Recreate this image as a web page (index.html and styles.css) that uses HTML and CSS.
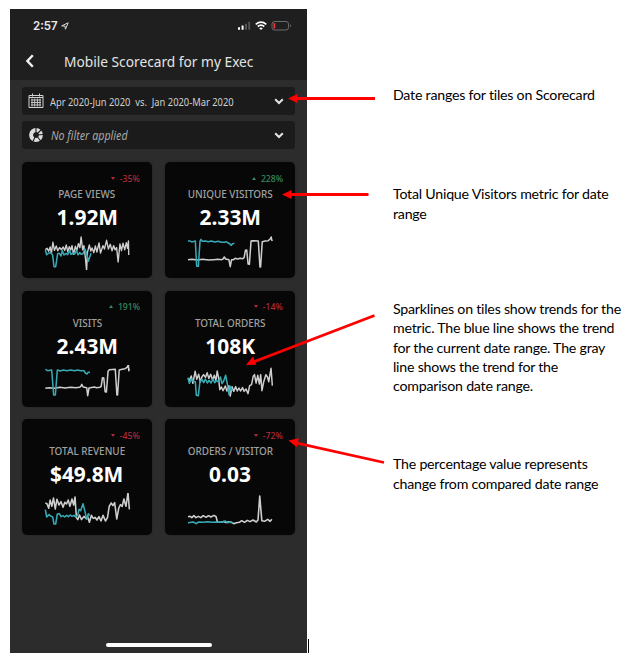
FILE: index.html
```html
<!DOCTYPE html>
<html lang="en">
<head>
<meta charset="utf-8">
<title>Mobile Scorecard</title>
<link rel="stylesheet" href="styles.css">
</head>
<body>
<main class="page">
  <section class="phone">
    <header class="top">
      <div class="status">
        <span class="time">2:57</span>
        <svg class="loc" width="8" height="8" viewBox="0 0 8 8"><path d="M.7 3.9 7.2.8 4.4 7.2 4 4.1Z"/></svg>
        <svg class="system" width="56" height="12" viewBox="0 0 56 12">
          <path d="M1 7.2h2v2.5H1zM4.600 5.600h2v4.100h-2z" fill="#fff"/>
          <path d="M8 3.700h2v6H8zM11.300 1.800h1.800v7.900h-1.800z" fill="#555"/>
          <g fill="none" stroke="#fff" stroke-width="1.700"><path d="M18.700 4.300q5.300-4.200 10.600 0M20.700 6.500q3.300-2.600 6.600 0"/></g>
          <path d="M22.200 8.200q1.800-1.400 3.600 0L24 10z" fill="#fff"/>
          <rect x="35" y="1.500" width="16.500" height="8.500" rx="2.500" fill="none" stroke="#6c6c6c"/>
          <path d="M53.200 4.200v3q1-.4 1-1.500t-1-1.500" fill="#6c6c6c"/>
          <rect x="36.500" y="3" width="1.700" height="5.500" rx=".6" fill="#f2373a"/>
        </svg>
      </div>
      <div class="nav">
        <svg class="back" width="10" height="16" viewBox="0 0 10 16"><path d="M7.800 2.200 2.400 8l5.400 5.800"/></svg>
        <h1>Mobile Scorecard for my Exec</h1>
      </div>
    </header>
    <div class="filters">
      <div class="filter">
        <svg class="icon" width="16" height="16" viewBox="0 0 16 16" fill="none" stroke="#d2d2d2"><path d="M1 2.500h14v12H1zM1 4.500h14M4.500.5v3M11.500.5v3"/><path d="M3 7h10M3 9.500h10M3 12h10M4 5.500v8M6.700 5.500v8M9.400 5.500v8M12 5.500v8" stroke-width=".9"/></svg>
        <span class="range">Apr 2020-Jun 2020&nbsp; vs.&nbsp; Jan 2020-Mar 2020</span>
        <svg class="chev" width="10" height="7" viewBox="0 0 10 7"><path d="m1.200 1.200 3.800 3.800 3.800-3.800"/></svg>
      </div>
      <div class="filter">
        <svg class="icon" width="16" height="16" viewBox="0 0 16 16"><circle cx="8" cy="8" r="4.800" fill="none" stroke="#dcdcdc" stroke-width="4.200"/><path d="M8 8V0M8 8l8-.5M8 8l5.500 7M8 8l-3.500 7.500M8 8l5.500-5.500" stroke="#1b1b1b" stroke-width="1.100"/><circle cx="8" cy="8" r="2.600" fill="#1b1b1b"/></svg>
        <span class="none">No filter applied</span>
        <svg class="chev" width="10" height="7" viewBox="0 0 10 7"><path d="m1.200 1.200 3.800 3.800 3.800-3.800"/></svg>
      </div>
    </div>
    <div class="tiles">
      <article class="tile">
        <div class="change down"><i></i><span>-35%</span></div>
        <h2>PAGE VIEWS</h2>
        <div class="value">1.92M</div>
        <svg class="spark" viewBox="96 240 270 102">
          <path class="prev" transform="translate(9.500 0) scale(.910 1)" d="M106 281l6-4 5 9 5-13 4 19 5-33 5 24 6-13 5 14 6-9 6 6 6-8 5 10 5-16 5 20 5-15 5 10 4-13 5 26 6-24 5 12 5-20 5 12 4-32 5 38 4-12 5 35 4 39 3-54 6-22 5 18 4-9 6 14 5-20 5 18 7-27 5 30 8-22 5 10 7-26 6 26 6-14 6 19 5-15 5 12 5-6 5 43 6-54 5 20 5-22 6 19 5-21 4 17 3-22 1 42"/>
          <path class="cur" d="M106 282l4 14 7-5 6-1 5 8 4 34h5l6-39 5-1 5 8 4-16 5 13 6-5 5 4 5-13 5 12 6-4 5 3 5-11 5 13 5-6 5 5 5-2 5-15 5 12 6 26 4-13 4-11"/>
        </svg>
      </article>
      <article class="tile">
        <div class="change up"><i></i><span>228%</span></div>
        <h2>UNIQUE VISITORS</h2>
        <div class="value">2.33M</div>
        <svg class="spark" viewBox="90 240 270 102">
          <path class="prev" transform="translate(1 0) scale(.99 1)" d="M99 311l12-1 16 2 16-2 18 2 16-1 12-1 12 1 4-2 4-6 4 6 10 2 4 21 4-21h6l5-4 7 2 8-2 8 1 4-3 4-22 4-1 4 42 4 1 5-70 4-1 18 1 5 78h2l5-76 9-2 9-1 6-5 3-6 2 10 2-2"/>
          <path class="cur" d="M99 255h7l4 3 11-3 4 76h5l5-75 3-6 4 6 9-1 9 2 9-2 10 3 11-2 9 3h10l4-2 7 4 5 3 3 4 5-5 5-1"/>
        </svg>
      </article>
      <article class="tile">
        <div class="change up"><i></i><span>191%</span></div>
        <h2>VISITS</h2>
        <div class="value">2.43M</div>
        <svg class="spark" viewBox="96 237 270 102">
          <path class="prev" transform="translate(1.600 0) scale(.985 1)" d="M106 307l12-2 16 2 17-3 15 2 17-2 16 1 11-1 4-3 3-6 4 8 11 2 3 24 4-23 16-3 7 2 10-1 4-3 4-26 4 1 4 41 4 1 5-62 4-5 18-1 5 77h2l5-75 9-2 9-2 6-4 4-8 1 18 2-6"/>
          <path class="cur" d="M106 250l7 4 12-2 6 75h5l6-75 9 3 9-3 10 2 12-2 12 2 9-2 9 2h10l4 7 5 3 4-5h5"/>
        </svg>
      </article>
      <article class="tile">
        <div class="change down"><i></i><span>-14%</span></div>
        <h2>TOTAL ORDERS</h2>
        <div class="value">108K</div>
        <svg class="spark" viewBox="90 237 270 102">
          <path class="prev" transform="translate(2.700 0) scale(.973 1)" d="M99 277l4 6 6-13 5 22 7-36 5 24 6-15 5 23 5-16 5-6 6 8 5-14 5 17 6-12 6 18 5-15 5 15 4-28 4 20 4 36 5-8 5 11 7-14 5 15 6-16 4 31 6-28 5 14 6-14 5 13 5-9 5 9 6-10 5 11 6-7 6 14 5-24 6-3 5-25 4-5 5 25 5-23 5 26 4-28 4 48 5-25 7-23 5 7 4 14 7-40 3 39 1 13"/>
          <path class="cur" d="M99 275l4 17 6-13 6 7 6 1 3 41 6 1 5-44 6-5 5 10 5-11 6 12 5-8 6 8 6-12 5 11 6-6 5 4 6-15 5 20 5-8 6-17 5 26 5 32 5-25 5 13"/>
        </svg>
      </article>
      <article class="tile">
        <div class="change down"><i></i><span>-45%</span></div>
        <h2>TOTAL REVENUE</h2>
        <div class="value">$49.8M</div>
        <svg class="spark" viewBox="96 241 270 102">
          <path class="prev" transform="translate(-2.700 0) scale(1.025 1)" d="M106 271l5 2 5 14 4-25 5 19 5-25 5 33 5-29 6 17 6-10 6 17 5-15 5 5 5-12 5 19 6-22 5 18 4-24 4 62 4 6 5-14 6 14 7-10 6 6 5-5 5 17 6-21 5 9 6-3 5 8 6-10 6 13 6-17 7 17 6-10 5-34 6-10 5 8 5-9 6 49 6-33 5-10 5 5 5-22 6 22 6-41 4 50"/>
          <path class="cur" d="M106 291l4 22 7-7 6 5 5 2 4 21h5l5-30 6-1 5 9 6-3 5 4 6-5 5 4 6-5 5 4 6-3 5 5 6-6 4-17 5 4 7-21 6 24 5 23 5-17 4 6"/>
        </svg>
      </article>
      <article class="tile">
        <div class="change down"><i></i><span>-72%</span></div>
        <h2>ORDERS / VISITOR</h2>
        <div class="value">0.03</div>
        <svg class="spark" viewBox="90 241 270 102">
          <path class="prev" transform="translate(-4 0) scale(1.040 1)" d="M99 312l6-1 5 4 6-6 6 6 7-4 7 4 7-6 8 5 7-5 7 4 9-5 6 4 4 17 10-1 8-1 7 3 7-3 9 2 6 4 8-3 8-1 7-5 8 5 8-6 8 4 9-5 9 6 5-6 5-72 6 74 8 2 9-6 7 6 5-6"/>
          <path class="cur" d="M99 330l15-2 7 3 3 2 6-5 14 1 14-2 14 2 14-1 12 1 7-3 6-1 7 5 6-2 9 3"/>
        </svg>
      </article>
    </div>
    <div class="home"></div>
  </section>
  <aside class="notes">
    <p class="n1">Date ranges for tiles on Scorecard</p>
    <p class="n2">Total Unique Visitors metric for date<br>range</p>
    <p class="n3">Sparklines on tiles show trends for the<br>metric. The blue line shows the trend<br>for the current date range. The gray<br>line shows the trend for the<br>comparison date range.</p>
    <p class="n4">The percentage value represents<br>change from compared date range</p>
  </aside>
  <svg class="arrows" width="632" height="664" viewBox="0 0 632 664">
    <path class="shaft" d="M375 98.500h-78M368.500 194.500H291M374.500 315.500 254 361.800M384 462.500l-87-19.300"/>
    <path class="head" d="m288 98.500 9.500-4.500v9zM282 194.500l9.500-4.500v9zM246 365l7-8.500 3.300 8.300zM288.500 440.500l10.500-2.300-2.200 9z"/>
  </svg>
  <div class="caret"></div>
</main>
</body>
</html>
```

FILE: styles.css
```css
* { box-sizing: border-box; }
body { margin: 0; background: #fff; }
h1, h2, p { margin: 0; font-weight: 400; }
svg { display: block; flex: none; }
.page { position: relative; display: flex; align-items: flex-start; width: 632px; height: 664px; padding: 9px 0 0 10px; overflow: hidden; }
.phone { width: 297px; height: 644px; display: flex; flex-direction: column; background: #2c2c2c; font-family: "Noto Sans", "Open Sans", sans-serif; white-space: nowrap; }
.top { height: 71px; background: #1f1f1f; }
.status { display: flex; align-items: center; height: 33px; padding: 0 14px 0 23px; }
.time { font: 600 11.500px Inter, sans-serif; color: #e8e8e8; }
.loc { margin-left: 3px; fill: none; stroke: #ddd; stroke-width: 1; }
.system { margin-left: auto; }
.nav { display: flex; align-items: center; height: 38px; padding: 0 0 0 15px; }
.back { fill: none; stroke: #f2f2f2; stroke-width: 2.400; }
h1 { margin-left: 29px; font-size: 15px; line-height: 20px; color: #e4e4e4; transform: scaleX(.915); transform-origin: left; }
.filters { display: grid; gap: 6px; padding: 7px 12px 0; }
.filter { display: flex; align-items: center; height: 28px; padding: 0 11px 0 6px; border-radius: 3px; background: #1b1b1b; overflow: hidden; }
.range, .none { font-size: 11px; color: #cfcfcf; transform: scaleX(.85); transform-origin: left; margin-left: 6px; }
.none { font-size: 12px; font-style: italic; color: #a8a8a8; margin-left: 7px; transform: scaleX(.89); }
.chev { margin-left: auto; fill: none; stroke: #e4e4e4; stroke-width: 2; }
.tiles { display: grid; grid-template-columns: 130px 130px; grid-auto-rows: 116px; gap: 12.500px 13px; padding: 13px 12px 0; }
.tile { display: flex; flex-direction: column; align-items: center; border-radius: 5px; background: #070707; box-shadow: 0 0 2px #202020; padding-top: 9px; }
.change { align-self: flex-end; display: flex; align-items: center; height: 14px; margin-right: 12px; font-size: 9px; font-weight: 500; }
.change span { transform: scaleX(.96); transform-origin: right; }
.change i { margin-right: 4px; border: 2.500px solid transparent; }
.down { color: #b02b3c; }
.down i { border-top: 3px solid; border-bottom: 0; }
.up { color: #38895f; }
.up i { border-bottom: 3px solid; border-top: 0; }
h2 { height: 18px; font-size: 11px; line-height: 18px; font-weight: 500; color: #a0a0a0; transform: scaleX(.9); }
.value { height: 28px; line-height: 27px; font-size: 22px; font-weight: 700; color: #fff; transform: scaleX(.95); }
.spark { width: 90px; height: 34px; margin-top: 5px; fill: none; stroke-width: 4.600; stroke-linejoin: round; }
.prev { stroke: #cecece; }
.cur { stroke: #38aab5; }
.home { width: 106px; height: 4px; margin: auto auto 6px; border-radius: 2px; background: #fff; }
.notes { margin-left: 86px; font: 14.200px/19.200px Lato, sans-serif; letter-spacing: -.23px; font-variant-ligatures: none; color: #000; white-space: nowrap; }
.n1 { margin-top: 76px; }
.n2 { margin-top: 80px; line-height: 20px; }
.n3 { margin-top: 75px; }
.n4 { margin-top: 59px; line-height: 20px; }
.arrows { position: absolute; left: 0; top: 0; }
.shaft { fill: none; stroke: #f00; stroke-width: 2.800; }
.head { fill: #f00; }
.caret { position: absolute; left: 308px; top: 639px; width: 1px; height: 14px; background: #000; }
```
